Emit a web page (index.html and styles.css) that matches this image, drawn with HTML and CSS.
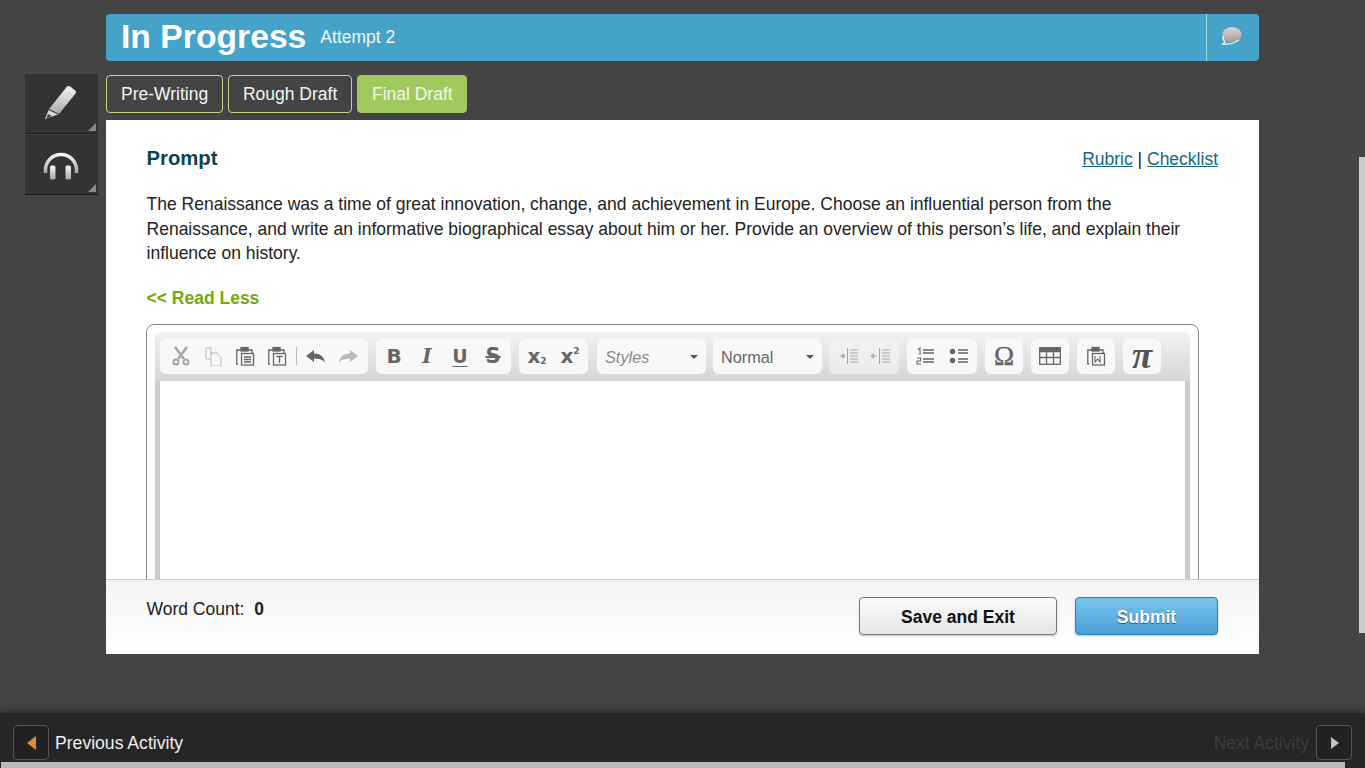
FILE: index.html
```html
<!DOCTYPE html>
<html lang="en">
<head>
<meta charset="utf-8">
<title>In Progress</title>
<link rel="stylesheet" href="styles.css">
</head>
<body>
<svg class="defs" width="0" height="0" aria-hidden="true">
  <defs>
    <linearGradient id="metal" x1="0" y1="0" x2="0" y2="1">
      <stop offset="0" stop-color="#f6f6f6"/>
      <stop offset="1" stop-color="#a8a8a8"/>
    </linearGradient>
    <linearGradient id="bubble" x1="0" y1="0" x2="0" y2="1">
      <stop offset="0" stop-color="#d8d8d8"/>
      <stop offset="1" stop-color="#a89c98"/>
    </linearGradient>
  </defs>
</svg>
<div class="page">
  <div class="main">
    <aside class="tools">
      <button class="tool tool-pencil">
        <svg width="36" height="36" viewBox="0 0 36 36"><path d="M24 2.500c1-.8 2.200-.8 3.200 0l5 4c1 .9 1.100 2.200.2 3.300L16 30 6 25z" fill="url(#metal)"/><path d="M5.500 26l9.500 4.500L2 35z" fill="#d9d9d9"/><path d="M5 30l4 2-5.500 2.500z" fill="#444"/></svg>
        <i class="corner"></i>
      </button>
      <button class="tool">
        <svg width="36" height="32" viewBox="0 0 36 32"><path d="M2.500 24v-3A15.500 15.500 0 0 1 33.500 21v3" fill="none" stroke="url(#metal)" stroke-width="3.500"/><rect x="7" y="16.500" width="5.500" height="14" rx="1.500" fill="url(#metal)"/><rect x="22.500" y="16.500" width="5.500" height="14" rx="1.500" fill="url(#metal)"/></svg>
        <i class="corner"></i>
      </button>
    </aside>
    <div class="content">
      <header class="titlebar">
        <h1 class="title">In Progress</h1>
        <span class="attempt">Attempt 2</span>
        <button class="chat">
          <svg width="24" height="22" viewBox="0 0 24 22"><ellipse cx="12" cy="9.500" rx="9.500" ry="7.500" fill="url(#bubble)"/><path d="M3 11c0 3 1 5 2 6-1 1-1.500 1.500-2 2 5 .5 11-.5 16-4" fill="none" stroke="#dff0f7" stroke-width="1.500"/></svg>
        </button>
      </header>
      <nav class="tabs">
        <a class="tab">Pre-Writing</a>
        <a class="tab">Rough Draft</a>
        <a class="tab tab-active">Final Draft</a>
      </nav>
      <section class="panel">
        <div class="panel-body">
          <div class="prompt-head">
            <h2 class="prompt-title">Prompt</h2>
            <div class="prompt-links"><a>Rubric</a> | <a>Checklist</a></div>
          </div>
          <p class="prompt-text">The Renaissance was a time of great innovation, change, and achievement in Europe. Choose an influential person from the Renaissance, and write an informative biographical essay about him or her. Provide an overview of this person’s life, and explain their influence on history.</p>
          <a class="read-less">&lt;&lt; Read Less</a>
          <div class="editor">
            <div class="toolbar">
              <div class="group g-clip">
                <span class="btn off"><svg width="20" height="20" viewBox="0 0 20 20" fill="none" stroke="#666" stroke-width="2.600"><path d="M4 1l9 12M16 1L7 13"/><circle cx="5" cy="16" r="2.500" stroke-width="2"/><circle cx="15" cy="16" r="2.500" stroke-width="2"/></svg></span>
                <span class="btn off"><svg width="20" height="20" viewBox="0 0 20 20" fill="none" stroke="#888" stroke-width="1"><path d="M8 9V2H3v11h5"/><path d="M8 7h6l4 5v8H8z"/></svg></span>
                <span class="btn"><svg width="20" height="20" viewBox="0 0 20 20" fill="none" stroke="#666" stroke-width="1.300"><path d="M3 18H1.800V4H6M13 4h4v3"/><rect x="6" y="1.500" width="7" height="3.500" fill="#666"/><rect x="6.500" y="7.500" width="12" height="11.500"/><path d="M9 11h7M9 13.500h7M9 16h7"/></svg></span>
                <span class="btn"><svg width="20" height="20" viewBox="0 0 20 20" fill="none" stroke="#666" stroke-width="1.300"><path d="M3 18H1.800V4H6M13 4h4v3"/><rect x="6" y="1.500" width="7" height="3.500" fill="#666"/><rect x="6.500" y="7.500" width="12" height="11.500"/><path d="M9.500 10.500h6M12.500 10.500V17"/></svg></span>
                <span class="sep"></span>
                <span class="btn"><svg width="20" height="16" viewBox="0 0 20 16"><path d="M0 8l8-6v3.500c6 0 10 3 11 9-2.500-3-6-4-11-4V14z" fill="#666"/></svg></span>
                <span class="btn off"><svg width="20" height="16" viewBox="0 0 20 16"><path d="M20 8l-8-6v3.500c-6 0-10 3-11 9 2.500-3 6-4 11-4V14z" fill="#888"/></svg></span>
              </div>
              <div class="group g-style">
                <span class="btn ch ch-b">B</span>
                <span class="btn ch ch-i">I</span>
                <span class="btn ch ch-u">U</span>
                <span class="btn ch ch-s">S</span>
              </div>
              <div class="group g-style">
                <span class="btn ch ch-x">x<small class="sub">2</small></span>
                <span class="btn ch ch-x">x<small class="sup">2</small></span>
              </div>
              <div class="combo combo-styles"><em>Styles</em><i class="caret"></i></div>
              <div class="combo combo-format"><span>Normal</span><i class="caret"></i></div>
              <div class="group g-indent off">
                <span class="btn"><svg width="20" height="16" viewBox="0 0 20 16" fill="none" stroke="#777"><path d="M9.500 0v16M12 2h8M12 5h8M12 8h8M12 11h8M12 14h8M2 8h5"/><path d="M7 8L4.500 6v4z" fill="#777"/></svg></span>
                <span class="btn"><svg width="20" height="16" viewBox="0 0 20 16" fill="none" stroke="#777"><path d="M9.500 0v16M12 2h8M12 5h8M12 8h8M12 11h8M12 14h8M2 8h5"/><path d="M1 8l2.500-2v4z" fill="#777"/></svg></span>
              </div>
              <div class="group g-style g-lists">
                <span class="btn"><svg width="20" height="18" viewBox="0 0 20 18" fill="none" stroke="#666" stroke-width="1.300"><path d="M7 3h11M7 6h11M7 12h11M7 15h11"/><path d="M2 2.500L4 1v7" stroke-width="1.100"/><path d="M1 11h3.500v3H1v3h4" stroke-width="1.100"/></svg></span>
                <span class="btn"><svg width="20" height="18" viewBox="0 0 20 18" fill="none" stroke="#666" stroke-width="1.300"><circle cx="3.500" cy="4.500" r="2.700" fill="#666" stroke="none"/><circle cx="3.500" cy="13.500" r="2.700" fill="#666" stroke="none"/><path d="M9 3h10M9 6h10M9 12h10M9 15h10"/></svg></span>
              </div>
              <div class="group g-one"><span class="btn ch ch-o">Ω</span></div>
              <div class="group g-one"><span class="btn"><svg width="22" height="18" viewBox="0 0 22 18" fill="none" stroke="#666" stroke-width="1.300"><rect x=".7" y=".7" width="20.600" height="16.600"/><path d="M0 3h22" stroke-width="4.500"/><path d="M0 10.500h22M7.500 5v12M14.500 5v12"/></svg></span></div>
              <div class="group g-one"><span class="btn"><svg width="20" height="20" viewBox="0 0 20 20" fill="none" stroke="#666" stroke-width="1.300"><path d="M3 18H1.800V4H6M13 4h4v3"/><rect x="6" y="1.500" width="7" height="3.500" fill="#666"/><rect x="6.500" y="7.500" width="12" height="11.500"/><path d="M9 10v6l2.500-3 2.500 3v-6" stroke-width="1.100"/></svg></span></div>
              <div class="group g-one"><span class="btn ch ch-p">π</span></div>
            </div>
            <div class="edit-area"></div>
          </div>
        </div>
        <footer class="panel-foot">
          <div class="wordcount">Word Count:&nbsp; <b>0</b></div>
          <div class="actions">
            <button class="action save">Save and Exit</button>
            <button class="action submit">Submit</button>
          </div>
        </footer>
      </section>
    </div>
  </div>
  <footer class="bottombar">
    <div class="nav-side">
      <button class="nav-btn"><i class="arrow-left"></i></button>
      <span class="nav-label">Previous Activity</span>
    </div>
    <div class="nav-side">
      <span class="nav-label nav-disabled">Next Activity</span>
      <button class="nav-btn"><i class="arrow-right"></i></button>
    </div>
  </footer>
  <div class="scroll-v"></div>
  <div class="scroll-h"></div>
</div>
</body>
</html>
```
FILE: styles.css
```css
* { box-sizing: border-box; }
html, body { margin: 0; padding: 0; height: 100%; overflow: hidden; }
body { background: #444; font-family: "Liberation Sans", Arial, sans-serif; color: #222; }
.defs { position: absolute; }
button { font-family: inherit; cursor: pointer; }

.page { position: relative; height: 768px; display: flex; flex-direction: column; }
.main { flex: 1; display: flex; align-items: flex-start; padding: 14px 0 0 25px; min-height: 0; }

.tools { width: 73px; margin: 60px 8px 0 0; display: flex; flex-direction: column; gap: 1px; }
.tool { position: relative; width: 73px; height: 60px; padding: 0 2px 0 0; border: 0; border-bottom: 1px solid #1c1c1c; background: #333; display: flex; align-items: center; justify-content: center; }
.tool-pencil { padding-bottom: 3px; }
.corner { position: absolute; right: 2px; bottom: 2px; width: 0; height: 0; border-style: solid; border-width: 0 0 8px 8px; border-color: transparent transparent #8a8a8a transparent; }

.content { width: 1153px; display: flex; flex-direction: column; }
.titlebar { height: 47px; background: #45a3c9; border-radius: 4px; display: flex; align-items: center; padding-left: 15px; color: #fff; }
.title { margin: 0 14px 4px 0; font-size: 33.700px; line-height: 40px; font-weight: 700; }
.attempt { font-size: 17.500px; color: #eef7fb; }
.chat { margin-left: auto; width: 53px; height: 47px; padding: 0 2px 3px 0; background: none; border: 0; border-left: 1px solid #a9d6e8; display: flex; align-items: center; justify-content: center; }

.tabs { display: flex; gap: 4.700px; margin-top: 14px; height: 38px; }
.tab { height: 38px; padding: 0 14px; display: flex; align-items: center; font-size: 17.500px; border: 1px solid #c3d488; border-radius: 4px; color: #f5f5f5; }
.tab-active { padding-right: 13.500px; background: #a2c95f; border-color: #a2c95f; color: #f2f8e6; }

.panel { margin-top: 7px; height: 534px; background: #fff; display: flex; flex-direction: column; }
.panel-body { flex: 1; min-height: 0; overflow: hidden; padding: 26px 41px 0 40.500px; }
.prompt-head { display: flex; justify-content: space-between; align-items: center; height: 24px; }
.prompt-title { margin: 0; font-size: 20.300px; font-weight: 700; color: #0d4350; }
.prompt-links { font-size: 17.500px; padding-top: 2px; color: #222; }
.prompt-links a { color: #0f6a80; text-decoration: underline; }
.prompt-text { margin: 22px 0 0; font-size: 17.530px; line-height: 24.500px; color: #222; }
.read-less { display: block; margin-top: 20px; font-size: 17.500px; line-height: 24px; font-weight: 700; color: #74a80e; }

.editor { margin: 14px 0 0 -.5px; width: 1053px; height: 400px; border: 1px solid #888; border-radius: 8px; padding: 7px 8px; }
.toolbar { height: 49px; padding: 7px 0 0 5px; display: flex; gap: 8px; background: linear-gradient(#f2f2f2, #d6d6d6); border-radius: 6px 6px 0 0; }
.group, .combo { height: 35px; background: #f8f8f8; border-radius: 6px; display: flex; align-items: center; }
.g-clip { padding: 0 4px 0 5px; }
.g-style { padding: 0 1.500px; }
.g-lists { padding: 0 2px; }
.g-indent { padding: 0 3px; margin-left: -1px; }
.g-one { width: 38px; justify-content: center; }
.btn { width: 32px; height: 35px; display: flex; align-items: center; justify-content: center; color: #666; flex: none; }
.g-style .btn { width: 33px; }
.off { opacity: .55; }
.sep { width: 1px; height: 18px; margin: 0 3px; background: #bbb; }
.ch { font-weight: 700; font-size: 19px; }
.ch-b { font-family: "DejaVu Sans", sans-serif; font-size: 20px; }
.ch-i { font-family: "DejaVu Serif", serif; font-style: italic; font-size: 20px; }
.ch-u { font-family: "DejaVu Sans", sans-serif; font-size: 19px; text-decoration: underline; text-underline-offset: 3px; }
.ch-s { font-family: "DejaVu Sans", sans-serif; font-size: 21px; text-decoration: line-through; }
.ch-x { font-family: "DejaVu Sans", sans-serif; font-size: 20px; line-height: 1; }
.ch-x small { font-size: 9px; font-weight: 700; }
.sub { align-self: flex-end; margin-bottom: 8px; }
.sup { align-self: flex-start; margin-top: 8px; }
.ch-o { font-family: "Liberation Serif", serif; font-weight: 400; font-size: 27px; width: 38px; -webkit-text-stroke: .5px #666; }
.ch-p { font-family: "Liberation Serif", serif; font-style: italic; font-size: 37px; line-height: 30px; width: 38px; color: #555; }

.combo { width: 109px; padding: 2px 8px 0; justify-content: space-between; font-size: 16.300px; color: #666; }
.combo-styles { margin-left: 1px; }
.combo-styles em { color: #888; }
.combo-format { margin-left: -1px; }
.caret { width: 0; height: 0; border-style: solid; border-width: 4px 4px 0 4px; border-color: #555 transparent transparent transparent; }

.edit-area { height: 340px; background: #fff; border-left: 5px solid #ccc; border-right: 5px solid #ccc; }

.panel-foot { height: 75px; flex: none; border-top: 1px solid #ccc; background: linear-gradient(#f4f4f4, #fff); display: flex; justify-content: space-between; align-items: flex-start; padding: 17px 41px 0 40.500px; }
.wordcount { font-size: 17.500px; line-height: 24px; color: #222; }
.actions { display: flex; gap: 18px; }
.action { height: 38px; font-size: 17.500px; font-weight: 700; border-radius: 4px; padding: 2px 0 0; }
.save { width: 198px; border: 1px solid #7a7a7a; background: linear-gradient(#fbfbfb, #e4e4e4); color: #111; box-shadow: 0 1px 2px rgba(0,0,0,.25); }
.submit { width: 143px; border: 1px solid #2c7fae; background: linear-gradient(#78c4f0, #4a9fd6); color: #fff; text-shadow: 0 1px 1px rgba(0,50,80,.7); box-shadow: 0 1px 2px rgba(30,80,180,.3); }

.bottombar { height: 55px; flex: none; display: flex; justify-content: space-between; align-items: flex-start; padding: 12px 13px 0; background: #262626; box-shadow: 0 -3px 5px rgba(30,30,30,.5); }
.nav-side { display: flex; align-items: center; gap: 6px; }
.nav-btn { width: 36px; height: 35px; padding: 0; background: #222; border: 1px solid #555; border-radius: 4px; display: flex; align-items: center; justify-content: center; }
.nav-label { font-size: 17.600px; padding-top: 2px; color: #eee; }
.nav-disabled { color: #3c3c3c; font-size: 17.500px; margin-right: 1px; }
.arrow-left { width: 0; height: 0; border-style: solid; border-width: 7px 9px 7px 0; border-color: transparent #e08a35 transparent transparent; }
.arrow-right { width: 0; height: 0; margin-left: 2px; border-style: solid; border-width: 6.500px 0 6.500px 8px; border-color: transparent transparent transparent #c2c2c2; }

.scroll-v { position: absolute; left: 1359px; top: 157px; width: 6px; height: 476px; background: #ccc; }
.scroll-h { position: absolute; left: 1px; top: 762px; width: 1344px; height: 6px; background: #bbb; }
```
